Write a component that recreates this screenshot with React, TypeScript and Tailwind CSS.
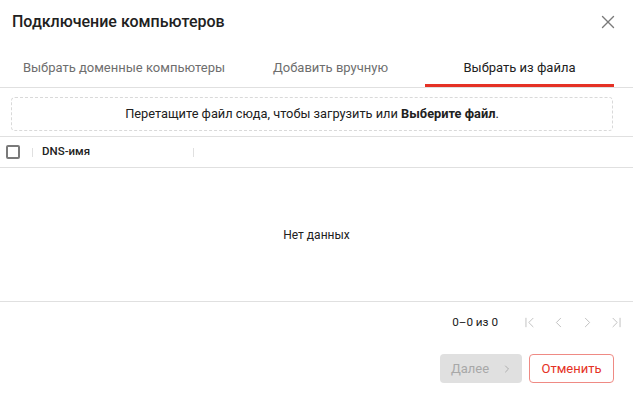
import React from "react";
import { X, ChevronLeft, ChevronRight, ChevronFirst, ChevronLast } from "lucide-react";

const tabs = [
  { label: "Выбрать доменные компьютеры", width: "w-[224px]" },
  { label: "Добавить вручную", width: "w-[189px]" },
  { label: "Выбрать из файла", width: "w-[189px]" },
];

export default function App() {
  const active = 2;

  return (
    <div className="w-[633px] h-[393px] bg-white flex flex-col font-['Roboto',sans-serif] text-[#212121] overflow-hidden">
      {/* header */}
      <div className="h-[41px] flex items-center justify-between pl-[12px] pr-[14px] pt-[2px]">
        <h1 className="text-[16px] font-medium">Подключение компьютеров</h1>
        <X size={22} strokeWidth={1.5} className="text-[#7a7a7a]" />
      </div>

      {/* tabs */}
      <div className="border-b border-[#e0e0e0] px-[12px]">
        <div className="flex">
          {tabs.map((t, i) => (
            <div
              key={t.label}
              className={`${t.width} h-[46px] pt-[10px] flex items-center justify-center text-[13px] border-b-[3px] ${
                i === active ? "border-[#e53125] text-[#212121]" : "border-transparent text-[#6e6e6e]"
              }`}
            >
              {t.label}
            </div>
          ))}
        </div>
      </div>

      {/* drop zone */}
      <div className="ml-[11px] mr-[20px] mt-[9px] h-[34px] border border-dashed border-[#d9d9d9] rounded-[4px] flex items-center justify-center text-[12.8px] text-[#212121]">
        <span>
          Перетащите файл сюда, чтобы загрузить или <b className="font-bold">Выберите файл</b>.
        </span>
      </div>

      {/* table header */}
      <div className="mt-[5px] h-[32px] border-y border-[#e0e0e0] flex items-center">
        <div className="w-[32px] flex items-center pl-[6px]">
          <div className="w-[14px] h-[14px] border-2 border-[#7a7a7a] rounded-[2px]" />
        </div>
        <div className="w-[1px] h-[9px] bg-[#e0e0e0]" />
        <div className="w-[160px] pl-[9px] text-[11.5px] font-medium text-[#212121]">DNS-имя</div>
        <div className="w-[1px] h-[9px] bg-[#e0e0e0]" />
      </div>

      {/* empty body */}
      <div className="h-[134px] border-b border-[#e0e0e0] flex items-center justify-center text-[12px] text-[#212121]">
        Нет данных
      </div>

      {/* pagination */}
      <div className="h-[41px] flex items-center justify-end pr-[8px] text-[11.7px] text-[#212121]">
        <span className="mr-[23px]">0–0 из 0</span>
        <div className="flex items-center gap-[12px] text-[#bdbdbd]">
          <ChevronFirst size={17} strokeWidth={1.3} />
          <ChevronLeft size={17} strokeWidth={1.3} />
          <ChevronRight size={17} strokeWidth={1.3} />
          <ChevronLast size={17} strokeWidth={1.3} />
        </div>
      </div>

      {/* actions */}
      <div className="flex justify-end gap-[7px] pr-[19px] mt-[11px]">
        <button
          type="button"
          disabled
          className="h-[29px] w-[82px] rounded-[4px] bg-[#e0e0e0] text-[#a8a8a8] text-[13px] flex items-center justify-center gap-[12px] pl-[2px]"
        >
          Далее
          <ChevronRight size={12} strokeWidth={1.8} />
        </button>
        <button
          type="button"
          className="h-[29px] w-[85px] rounded-[4px] border border-[#ef8a84] text-[#e53125] text-[13px] flex items-center justify-center"
        >
          Отменить
        </button>
      </div>
    </div>
  );
}
